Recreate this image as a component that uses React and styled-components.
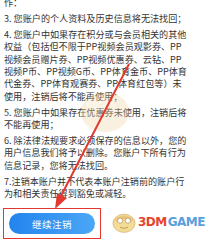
import styled, { createGlobalStyle } from 'styled-components';

const Global = createGlobalStyle`
  html, body { margin: 0; padding: 0; background: #fff; }
`

const Page = styled.div`
  position: relative;
  width: 210px;
  height: 240px;
  overflow: hidden;
  background: #fff;
  font-family: "Noto Sans CJK SC", "Noto Sans", sans-serif;
  color: #333;
`
const Terms = styled.div`
  margin-top: -4px;
  padding-left: 4px;
  font-size: 9.1px;
  line-height: 12.3px;
`
const Para = styled.div`
  margin-bottom: 3.8px;
`
const Line = styled.div`
  white-space: nowrap;
`
const Frame = styled.div`
  margin: 9px 0 0 3px;
  width: 98px;
  height: 31px;
  border: 1.5px solid #e2362e;
  padding: 4px 5px 0 5px;
  box-sizing: border-box;
`
const Button = styled.div`
  height: 21px;
  border-radius: 11px;
  background: linear-gradient(90deg, #2384ee, #4ba7f6);
  color: #fff;
  font-size: 9.5px;
  display: flex;
  align-items: center;
  justify-content: center;
  letter-spacing: 0.5px;
`
const Overlay = styled.svg`
  position: absolute;
  left: 0;
  top: 0;
  pointer-events: none;
`
const Logo = styled.div`
  position: absolute;
  right: 5px;
  bottom: 5px;
  display: flex;
  align-items: center;
  gap: 1px;
`
const LogoText = styled.span`
  font-family: "DejaVu Sans", "Liberation Sans", sans-serif;
  font-weight: bold;
  font-size: 12px;
  letter-spacing: -0.5px;
  color: ${p => p.$c};
`

const paragraphs = [
  ['作：'],
  ['3. 您账户的个人资料及历史信息将无法找回；'],
  [
    '4. 您账户中如果存在积分或与会员相关的其他',
    '权益（包括但不限于PP视频会员观影券、PP',
    '视频会员赠片券、PP视频优惠券、云钻、PP',
    '视频P币、PP视频G币、PP体育金币、PP体育',
    '代金券、PP体育观赛券、PP体育红包等）未',
    '使用，注销后将不能再使用；',
  ],
  ['5. 您账户中如果存在优惠券未使用，注销后将', '不能再使用；'],
  [
    '6. 除法律法规要求必须保存的信息以外，您的',
    '用户信息我们将予以删除。您账户下所有行为',
    '信息记录，您将无法找回。',
  ],
  ['7.注销本账户并不代表本账户注销前的账户行', '为和相关责任得到豁免或减轻。'],
];

function Mascot({ size, opacity }) {
  return (
    <svg width={size} height={size} viewBox="0 0 40 40" style={{ opacity }}>
      <ellipse cx="20" cy="22" rx="17" ry="14" fill="#f4d98a" stroke="#c9a45a" strokeWidth="1" />
      <path d="M6 16 Q20 4 34 16 L32 20 Q20 12 8 20 Z" fill="#e8c070" />
      <circle cx="14" cy="18" r="4" fill="#fff" stroke="#a07a40" strokeWidth="1" />
      <circle cx="26" cy="18" r="4" fill="#fff" stroke="#a07a40" strokeWidth="1" />
      <path d="M14 28 Q20 32 26 28" stroke="#a07a40" strokeWidth="1.2" fill="none" />
    </svg>
  );
}

export default function App() {
  return (
    <Page>
      <Global />
      <Terms>
        {paragraphs.map((lines, i) => (
          <Para key={i}>
            {lines.map((l, j) => <Line key={j}>{l}</Line>)}
          </Para>
        ))}
      </Terms>
      <Frame>
        <Button>继续注销</Button>
      </Frame>
      <Overlay width="210" height="240" viewBox="0 0 210 240">
        <g opacity="0.35">
          <ellipse cx="105" cy="112" rx="24" ry="20" fill="#efd6a6" />
          <ellipse cx="100" cy="104" rx="14" ry="8" fill="#f6e4c0" />
        </g>
        <line x1="129" y1="64" x2="61" y2="196" stroke="#e4392f" strokeWidth="2" />
        <polygon points="55,209 57,193 67,198" fill="#e4392f" />
      </Overlay>
      <Logo>
        <Mascot size={26} opacity={0.9} />
        <LogoText $c="#e4452f">3DM</LogoText>
        <LogoText $c="#5aa0dc">GAME</LogoText>
      </Logo>
    </Page>
  );
}
